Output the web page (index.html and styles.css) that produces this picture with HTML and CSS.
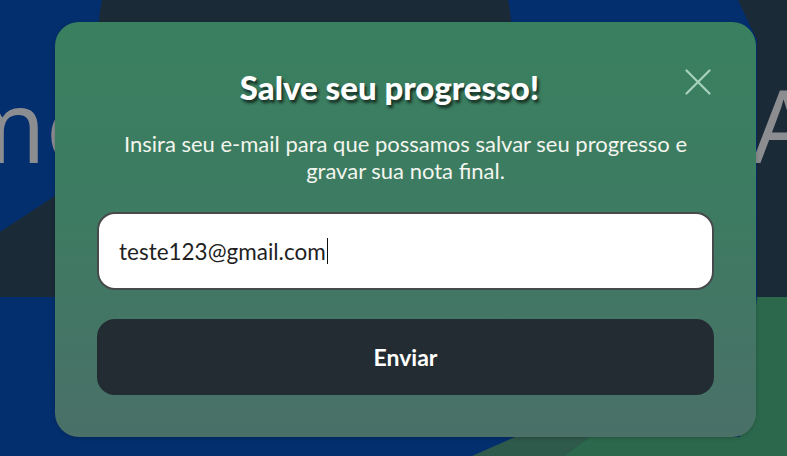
FILE: index.html
```html
<!DOCTYPE html>
<html lang="pt-BR">
<head>
<meta charset="utf-8">
<title>Salve seu progresso</title>
<link rel="stylesheet" href="styles.css">
</head>
<body>
<svg class="backdrop" width="787" height="456" viewBox="0 0 787 456" aria-hidden="true">
  <rect x="0" y="0" width="787" height="456" fill="#042f6e"/>
  <circle cx="305" cy="40" r="207" fill="#1b2a37"/>
  <polygon points="0,232 70,186 70,297 0,297" fill="#1b2a37"/>
  <polygon points="738,0 787,0 787,297 757,297 757,40" fill="#1b2a37"/>
  <polygon points="757,297 787,297 787,456 560,456 585,437 740,437" fill="#2c694c"/>
  <polygon points="472,456 515,437 590,437 565,456" fill="#2e5a4b"/>
  <text class="bg-word" x="106" y="163" text-anchor="end">mo</text>
  <text class="bg-word" x="752" y="163">A</text>
</svg>

<main class="stage">
  <section class="modal" role="dialog" aria-labelledby="modal-title">
    <header class="modal-head">
      <h1 id="modal-title" class="modal-title">Salve seu progresso!</h1>
      <button class="close" type="button" aria-label="Fechar">
        <svg width="26" height="26" viewBox="0 0 26 26"><path d="M1.5 1.5 L24.5 24.5 M24.5 1.5 L1.5 24.5" stroke="#a8d2bc" stroke-width="2.2" fill="none" stroke-linecap="round"/></svg>
      </button>
    </header>
    <p class="modal-text">Insira seu e-mail para que possamos salvar seu progresso e gravar sua nota final.</p>
    <div class="field"><span class="field-value">teste123@gmail.com</span><span class="caret"></span></div>
    <button class="submit" type="button">Enviar</button>
  </section>
</main>
</body>
</html>
```

FILE: styles.css
```css
* { box-sizing: border-box; }

html, body {
  margin: 0;
  width: 787px;
  height: 456px;
  overflow: hidden;
}

body {
  position: relative;
  background: #042f6e;
  font-family: Lato, "Open Sans", "Liberation Sans", sans-serif;
}

.backdrop {
  position: absolute;
  left: 0;
  top: 0;
}

.bg-word {
  font-family: "Open Sans", Lato, sans-serif;
  font-size: 100px;
  fill: #8c8d91;
}

.stage {
  position: relative;
  padding: 22px 0 0 55px;
}

.modal {
  width: 701px;
  height: 415px;
  border-radius: 24px;
  padding: 41px 42px 0 42px;
  background: linear-gradient(180deg, #39805f 0%, #3d7b62 45%, #4a7068 100%);
  box-shadow: 0 1px 4px rgba(0, 0, 0, 0.2);
  display: flex;
  flex-direction: column;
}

.modal-head {
  display: flex;
  align-items: flex-start;
}

.modal-title {
  flex: 1;
  margin: 0;
  text-align: center;
  font-size: 33px;
  font-weight: 900;
  line-height: 48px;
  color: #ffffff;
  text-shadow: 2px 3px 3px rgba(0, 0, 0, 0.65);
}

.close {
  width: 32px;
  height: 30px;
  margin-top: 6px;
  padding: 0;
  border: 0;
  background: transparent;
  display: flex;
  justify-content: center;
}

.modal-text {
  margin: 19px 0 0 0;
  text-align: center;
  font-size: 22px;
  line-height: 27px;
  color: #f3f5ee;
}

.field {
  margin-top: 28px;
  height: 78px;
  flex: none;
  border: 2px solid #474a4c;
  border-radius: 18px;
  background: #ffffff;
  padding: 0 20px;
  display: flex;
  align-items: center;
  font-size: 22.5px;
  color: #1f1f24;
}

.caret {
  width: 1.5px;
  height: 26px;
  background: #111;
  margin-left: 1px;
}

.submit {
  margin-top: 29px;
  height: 76px;
  flex: none;
  border: 0;
  border-radius: 18px;
  background: #232b33;
  color: #ffffff;
  font-family: Lato, "Open Sans", sans-serif;
  font-size: 23px;
  font-weight: 700;
}
```
